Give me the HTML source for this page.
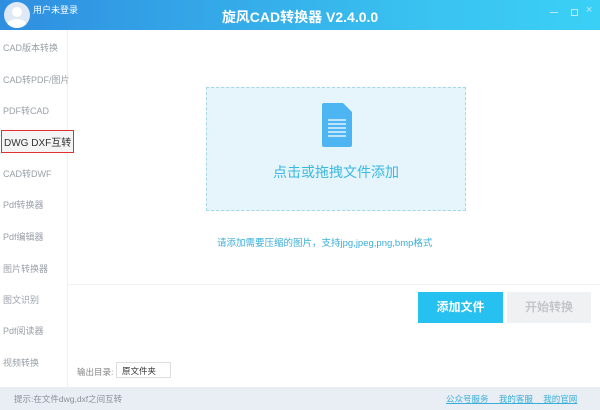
<!DOCTYPE html><html><head><meta charset="utf-8"><style>
body{margin:0;width:600px;height:410px;position:relative;overflow:hidden;background:#fff;font-family:"Liberation Sans","Noto Sans CJK SC",sans-serif}
.hd{position:absolute;left:0;top:0;width:600px;height:30px;background:linear-gradient(90deg,#2f8ee0,#39c2f0 70%,#3ad0f6)}
.av{position:absolute;left:4px;top:2px;width:26px;height:26px;border-radius:50%;background:#dfe9f5;overflow:hidden}
.av:before{content:"";position:absolute;left:8px;top:5px;width:10px;height:10px;border-radius:50%;background:#fff}
.av:after{content:"";position:absolute;left:3px;top:17px;width:20px;height:14px;border-radius:50%;background:#fff}
.side{position:absolute;left:0;top:30px;width:67px;height:357px;border-right:1px solid #eef0f3}
.side div{position:absolute;left:3px;font-size:9px;color:#9aa0a8;white-space:nowrap}
.box{position:absolute;left:206px;top:87px;width:258px;height:122px;border:1px dashed #a6d6ea;background:#e6f5fc}
.bar{position:absolute;left:0;top:387px;width:600px;height:23px;background:#e9eef4}
</style></head><body>
<div class="hd"><div class="av"></div>
<div style="position:absolute;left:33px;top:3px;color:#fff;font-size:9px">用户未登录</div>
<div style="position:absolute;left:0;width:600px;top:7px;text-align:center;color:#fff;font-size:14px;font-weight:bold">旋风CAD转换器 V2.4.0.0</div>
<div style="position:absolute;left:550px;top:12px;width:8px;height:1px;background:#bfe9fb"></div>
<div style="position:absolute;left:571px;top:9px;width:5px;height:5px;border:1px solid #bfe9fb"></div>
<div style="position:absolute;left:586px;top:4px;color:#bfe9fb;font-size:11px">×</div>
</div>
<div class="side">
<div style="top:11px">CAD版本转换</div>
<div style="top:43px">CAD转PDF/图片</div>
<div style="top:74px">PDF转CAD</div>
<div style="top:100px;left:1px;border:1px solid #e03030;padding:3px 2px;color:#333;font-size:10px;background:#f4f4f4">DWG DXF互转</div>
<div style="top:137px">CAD转DWF</div>
<div style="top:168px">Pdf转换器</div>
<div style="top:200px">Pdf编辑器</div>
<div style="top:232px">图片转换器</div>
<div style="top:263px">图文识别</div>
<div style="top:294px">Pdf阅读器</div>
<div style="top:326px">视频转换</div>
</div>
<div class="box">
<svg style="position:absolute;left:115px;top:15px" width="30" height="44" viewBox="0 0 30 44"><path d="M2 0H21L30 9V42Q30 44 28 44H2Q0 44 0 42V2Q0 0 2 0Z" fill="#4db6f2"/><g stroke="#fff" stroke-width="1.2"><path d="M6 17H24M6 21H24M6 25H24M6 29H24M6 33H24"/></g></svg>
<div style="position:absolute;left:0;width:258px;top:74px;text-align:center;color:#3bb8e0;font-size:14px">点击或拖拽文件添加</div>
</div>
<div style="position:absolute;left:217px;top:235px;color:#3aaed8;font-size:9.5px">请添加需要压缩的图片，支持jpg,jpeg,png,bmp格式</div>
<div style="position:absolute;left:68px;top:284px;width:532px;height:1px;background:#f0f2f5"></div>
<div style="position:absolute;left:418px;top:292px;width:85px;height:31px;background:#27c1f1;color:#fff;font-size:12px;font-weight:bold;text-align:center;line-height:31px">添加文件</div>
<div style="position:absolute;left:507px;top:292px;width:84px;height:31px;background:#f0f1f3;color:#c4c6ca;font-size:12px;font-weight:bold;text-align:center;line-height:31px">开始转换</div>
<div style="position:absolute;left:77px;top:366px;color:#888;font-size:8.5px">输出目录:</div>
<div style="position:absolute;left:116px;top:362px;width:55px;height:16px;border:1px solid #ddd;font-size:8.5px;color:#333;line-height:16px;padding-left:5px;box-sizing:border-box">原文件夹 <span style="color:#999;margin-left:6px">⌄</span></div>
<div class="bar">
<div style="position:absolute;left:14px;top:6px;color:#8a9098;font-size:8.5px">提示:在文件dwg,dxf之间互转</div>
<div style="position:absolute;left:446px;top:6px;color:#3aaed8;font-size:8.5px;text-decoration:underline;word-spacing:8px">公众号服务 我的客服 我的官网</div>
</div>
</body></html>
